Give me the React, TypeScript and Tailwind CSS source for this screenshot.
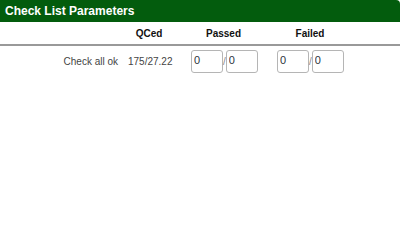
import React from "react";

const Box = ({ value }: { value: string }) => (
  <input
    readOnly
    value={value}
    className="w-[32px] h-[23px] border border-[#b5b5b5] rounded-[3px] px-[2px] pb-[2px] text-[11px] text-[#2d3540] bg-white outline-none"
  />
);

export default function App() {
  return (
    <div className="w-[400px] h-[239px] bg-white font-['Liberation_Sans',Arial,sans-serif]">
      <div className="h-[22px] bg-[#035c0d] rounded-tr-[4px] px-[5px] flex items-center text-white font-bold text-[12px]">
        Check List Parameters
      </div>
      <div className="grid grid-cols-[123px_52px_97px_76px] items-center border-b-2 border-[#999] h-[24px] text-[10px] font-bold text-[#111]">
        <div />
        <div className="text-center">QCed</div>
        <div className="text-center">Passed</div>
        <div className="text-center">Failed</div>
      </div>
      <div className="grid grid-cols-[123px_52px_97px_76px] items-center h-[30px] text-[10px] text-[#444]">
        <div className="text-right pr-[5px]">Check all ok</div>
        <div className="pl-[5px]">175/27.22</div>
        <div className="flex items-center pl-[16px] text-[#888]">
          <Box value="0" />/<Box value="0" />
        </div>
        <div className="flex items-center pl-[5px] text-[#888]">
          <Box value="0" />/<Box value="0" />
        </div>
      </div>
    </div>
  );
}
